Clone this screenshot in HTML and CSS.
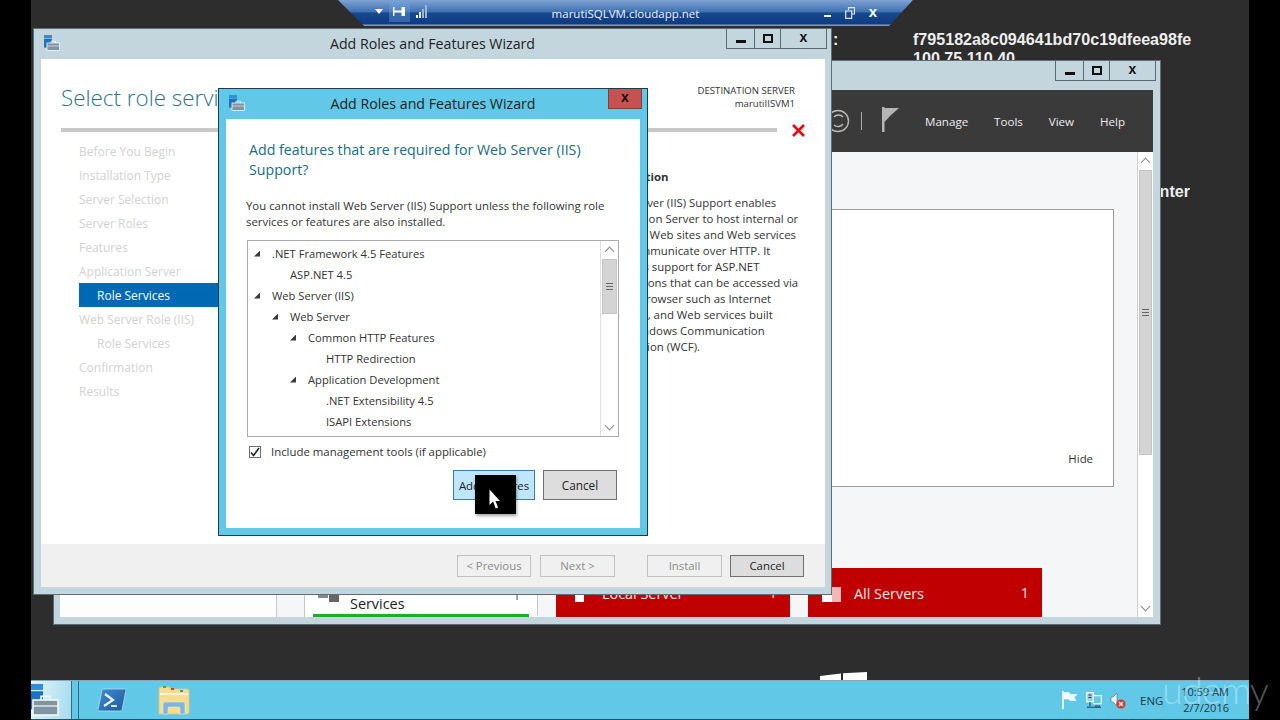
FILE: index.html
```html
<!DOCTYPE html>
<html lang="en">
<head>
  <meta charset="UTF-8" />
  <title>Add Roles and Features Wizard</title>
  <link rel="stylesheet" href="styles.css">
</head>
<body>
  <div class="screen">
    <svg width="0" height="0" class="defs">
      <symbol id="wizard-icon" viewBox="0 0 16 16">
        <rect x="0" y="0" width="8" height="3" fill="#2f8fd8"/>
        <rect x="0" y="3.6" width="8" height="9" fill="#1f73bd"/>
        <rect x="3" y="8" width="12.5" height="7.5" fill="#8094a4" stroke="#f4f8fa" stroke-width="0.8"/>
        <path d="M7 8V6.2h4.5V8" fill="none" stroke="#f4f8fa" stroke-width="0.8"/>
        <path d="M3 11h12.5" stroke="#f4f8fa" stroke-width="0.6"/>
      </symbol>
      <linearGradient id="ps-fill" x1="0" y1="0" x2="1" y2="1">
        <stop offset="0" stop-color="#3f8bd0"/>
        <stop offset="1" stop-color="#1d5a9e"/>
      </linearGradient>
    </svg>

    <div class="desktop-text colon">:</div>
    <div class="desktop-text machine">f795182a8c094641bd70c19dfeea98fe<br>100.75.110.40</div>
    <div class="desktop-text center">Center</div>
    <svg class="desktop-logo" viewBox="0 0 47 9" width="47" height="9">
      <path d="M0 4 L21 1.5 V9 H0Z M23 1.2 L47 0 V9 H23Z" fill="#fff"/>
    </svg>

    <!-- server manager behind the wizard -->
    <section class="window manager">
      <div class="titlebar">
        <div class="caption">
          <span class="cap-btn cap-min"><i></i></span>
          <span class="cap-btn cap-max"><i></i></span>
          <span class="cap-btn cap-close">x</span>
        </div>
      </div>
      <header class="manager-head">
        <svg class="refresh" width="24" height="24" viewBox="0 0 24 24">
          <circle cx="12" cy="12" r="10.5" fill="none" stroke="#b9b9b9" stroke-width="1.4"/>
          <path d="M17 8a6 6 0 0 0-9 0M17 15a6 6 0 0 1-9 1" fill="none" stroke="#b9b9b9" stroke-width="1.4"/>
        </svg>
        <span class="head-sep"></span>
        <svg class="flag" width="17" height="25" viewBox="0 0 17 25">
          <path d="M0 0h2.5v25H0z M2.5 1H17L8 9 2.5 15z" fill="#b5b5b5"/>
        </svg>
        <nav class="manager-menu">
          <span>Manage</span><span>Tools</span><span>View</span><span>Help</span>
        </nav>
      </header>
      <div class="manager-body">
        <div class="manager-content">
          <div class="welcome">
            <span class="hide-link">Hide</span>
          </div>
          <div class="tiles">
            <div class="tile-left"></div>
            <div class="tile-gap"></div>
            <div class="tile tile-ok">
              <div class="tile-marks"><i></i><i></i></div>
              <div class="tile-name">File and Storage<br>Services</div>
              <div class="tile-count">1</div>
            </div>
            <div class="tile-gap tile-gap-short"></div>
            <div class="tile tile-bad tile-local">
              <div class="tile-square"></div>
              <span>Local Server</span>
              <span class="tile-num">1</span>
            </div>
            <div class="tile-gap tile-gap-short"></div>
            <div class="tile tile-bad tile-all">
              <div class="tile-squares"><i></i><i></i></div>
              <span>All Servers</span>
              <span class="tile-num">1</span>
            </div>
          </div>
        </div>
        <div class="scrollbar big-scroll">
          <span class="sb-arrow"></span>
          <div class="sb-thumb big-thumb"><b></b></div>
          <div class="sb-track"></div>
          <span class="sb-arrow sb-down"></span>
        </div>
      </div>
    </section>

    <!-- wizard -->
    <section class="window wizard">
      <div class="titlebar">
        <svg class="win-icon" width="16" height="16"><use href="#wizard-icon"/></svg>
        <div class="win-title">Add Roles and Features Wizard</div>
        <div class="caption">
          <span class="cap-btn cap-min"><i></i></span>
          <span class="cap-btn cap-max"><i></i></span>
          <span class="cap-btn cap-close">x</span>
        </div>
      </div>
      <div class="wizard-body">
        <div class="wizard-head">
          <h1>Select role services</h1>
          <div class="destination">DESTINATION SERVER<br>marutiIISVM1</div>
        </div>
        <div class="wizard-rule">
          <div class="rule"></div>
          <svg width="13" height="13" viewBox="0 0 13 13">
            <path d="M1 1l11 11M12 1L1 12" stroke="#e00c14" stroke-width="2.6"/>
          </svg>
        </div>
        <div class="wizard-cols">
          <ul class="steps">
            <li>Before You Begin</li>
            <li>Installation Type</li>
            <li>Server Selection</li>
            <li>Server Roles</li>
            <li>Features</li>
            <li>Application Server</li>
            <li class="sub current">Role Services</li>
            <li>Web Server Role (IIS)</li>
            <li class="sub">Role Services</li>
            <li>Confirmation</li>
            <li>Results</li>
          </ul>
          <div class="description">
            <h2>Description</h2>
            <p>Web Server (IIS) Support enables<br>Application Server to host internal or<br>external Web sites and Web services<br>that communicate over HTTP. It<br>provides support for ASP.NET<br>applications that can be accessed via<br>a Web browser such as Internet<br>Explorer, and Web services built<br>with Windows Communication<br>Foundation (WCF).</p>
          </div>
        </div>
      </div>
      <div class="wizard-foot">
        <button class="btn" disabled>&lt; Previous</button>
        <button class="btn" disabled>Next &gt;</button>
        <button class="btn btn-install" disabled>Install</button>
        <button class="btn btn-cancel">Cancel</button>
      </div>
    </section>

    <!-- required features dialog -->
    <section class="window dialog">
      <div class="titlebar">
        <svg class="win-icon" width="16" height="16"><use href="#wizard-icon"/></svg>
        <div class="win-title">Add Roles and Features Wizard</div>
        <span class="dialog-close">x</span>
      </div>
      <div class="dialog-body">
        <h2 class="dialog-heading">Add features that are required for Web Server (IIS)<br>Support?</h2>
        <p class="dialog-text">You cannot install Web Server (IIS) Support unless the following role services or features are also installed.</p>
        <div class="tree-box">
          <ul class="tree">
            <li class="lvl0"><i class="twisty"></i>.NET Framework 4.5 Features</li>
            <li class="lvl1">ASP.NET 4.5</li>
            <li class="lvl0"><i class="twisty"></i>Web Server (IIS)</li>
            <li class="lvl1"><i class="twisty"></i>Web Server</li>
            <li class="lvl2"><i class="twisty"></i>Common HTTP Features</li>
            <li class="lvl3">HTTP Redirection</li>
            <li class="lvl2"><i class="twisty"></i>Application Development</li>
            <li class="lvl3">.NET Extensibility 4.5</li>
            <li class="lvl3">ISAPI Extensions</li>
          </ul>
          <div class="scrollbar">
            <span class="sb-arrow"></span>
            <div class="sb-thumb"><b></b></div>
            <div class="sb-track"></div>
            <span class="sb-arrow sb-down"></span>
          </div>
        </div>
        <label class="check-row">
          <span class="check">
            <svg width="10" height="10" viewBox="0 0 10 10"><path d="M1 5.5l2.6 3L9 1" fill="none" stroke="#222" stroke-width="1.6"/></svg>
          </span>
          Include management tools (if applicable)
        </label>
        <div class="dialog-actions">
          <button class="btn dialog-btn btn-add">Add Features</button>
          <button class="btn dialog-btn btn-cancel">Cancel</button>
        </div>
      </div>
    </section>

    <div class="cursor-box">
      <svg width="11" height="21" viewBox="0 0 11 21">
        <path d="M0.5 0.5V16l3.6-3.4 2.6 7 2.4-1-2.6-6.6h4.6z" fill="#fff"/>
      </svg>
    </div>

    <!-- remote desktop connection bar -->
    <div class="rdp-bar">
      <div class="rdp-left">
        <span class="rdp-drop"></span>
        <span class="rdp-pin">
          <svg width="13" height="9" viewBox="0 0 13 9">
            <path d="M.7 0v9" stroke="#fff" stroke-width="1.4"/>
            <path d="M1 3.6h8v1.8H1z" fill="#fff"/>
            <path d="M8.5 0H12v9H8.5z" fill="#fff"/>
          </svg>
        </span>
        <svg class="rdp-signal" width="11" height="13" viewBox="0 0 11 13">
          <path d="M0 10h2v3H0z" fill="#fff"/>
          <path d="M3 7h2v6H3z" fill="#e6edf6"/>
          <path d="M6 4h2v9H6zM9 0h2v13H9z" fill="#9db5d6"/>
        </svg>
      </div>
      <div class="rdp-name">marutiSQLVM.cloudapp.net</div>
      <div class="rdp-right">
        <span class="rdp-min"></span>
        <svg width="10" height="12" viewBox="0 0 10 12"><path d="M3.5 3V.7h6V7H7M.7 4h6v7.3h-6z" fill="none" stroke="#dfe8f4" stroke-width="1.2"/></svg>
        <span class="rdp-close">x</span>
      </div>
    </div>

    <!-- taskbar -->
    <footer class="taskbar">
      <div class="task-active">
        <svg width="32" height="32" viewBox="2 0 16 16"><use href="#wizard-icon"/></svg>
      </div>
      <span class="task-grip"></span>
      <div class="task-item ps">
        <svg width="28" height="24" viewBox="0 0 28 24">
          <path d="M6 1h21q1 0 1 1l-4 20q0 1-2 1H1q-1 0-1-1L4 2q0-1 2-1z" fill="url(#ps-fill)" stroke="#bcd8ea" stroke-width=".8"/>
          <path d="M7 6l8 6-9 6" fill="none" stroke="#eaf4fb" stroke-width="2.2"/>
          <path d="M13 18h6" stroke="#eaf4fb" stroke-width="1.8"/>
        </svg>
      </div>
      <div class="task-item folder">
        <svg width="32" height="30" viewBox="0 0 32 30">
          <path d="M1 4q0-2 2-2h8l3 2h15q2 0 2 2v22q0 1-1 1H2q-1 0-1-1z" fill="#f6dc8c" stroke="#e0c67c" stroke-width=".8"/>
          <path d="M2 9h28" stroke="#fff5d0" stroke-width="2"/>
          <rect x="5" y="1" width="3" height="2" fill="#3eb03e"/>
          <rect x="13" y="3" width="3" height="2" fill="#c04a30"/>
          <rect x="22" y="5" width="3" height="2" fill="#3a8cd0"/>
          <path d="M5 29V19q0-2 2-2h18q2 0 2 2v10h-5v-6q0-1-1-1H11q-1 0-1 1v6z" fill="#7fb4dc" stroke="#d8ecf6" stroke-width=".6"/>
        </svg>
      </div>
      <div class="tray">
        <svg width="16" height="18" viewBox="0 0 16 18"><path d="M1 0v18" stroke="#fff" stroke-width="1.6"/><path d="M2 1.5h5l1.5 2H15l-3 3 2 3H8l-1.5-1.5H2z" fill="#f2fafd" stroke="#fff" stroke-width=".6"/></svg>
        <svg width="16" height="16" viewBox="0 0 16 16"><path d="M.6.6h6.8v9H.6z" fill="#8fd4ea" stroke="#fff" stroke-width="1.2"/><path d="M7.4 3.6h8v8h-8" fill="none" stroke="#fff" stroke-width="1.2"/><path d="M2.5 3h3M2.5 5.5h3M4 10v4M9 14h5M1 15.2h14" stroke="#1f3a46" stroke-width="1"/></svg>
        <svg width="16" height="17" viewBox="0 0 16 17"><path d="M1 5h2l4-4v13l-4-4H1z" fill="#eaf4f8" stroke="#5d7c88" stroke-width=".7"/><circle cx="11" cy="12" r="4.6" fill="#d8352a"/><path d="M9 10l4 4M13 10l-4 4" stroke="#fff" stroke-width="1.3"/></svg>
        <span class="tray-lang">ENG</span>
        <div class="clock">10:59 AM<br>2/7/2016</div>
      </div>
    </footer>
  </div>
  <div class="watermark">udemy</div>
</body>
</html>
```

FILE: styles.css
```css
* {
  box-sizing: border-box;
}
html, body {
  margin: 0;
  height: 100%;
  background: #000;
  overflow: hidden;
}
body {
  font-family: 'Open Sans', 'Noto Sans', sans-serif;
  font-size: 11.4px;
  color: #333;
}
ul {
  list-style: none;
  margin: 0;
  padding: 0;
}
h1, h2, p {
  margin: 0;
  font-weight: 400;
}
.defs {
  position: absolute;
}

/* desktop */
.screen {
  position: absolute;
  left: 31px;
  top: 0;
  width: 1218px;
  height: 720px;
  background: #2d2d2d;
  overflow: hidden;
}
.desktop-text {
  position: absolute;
  font-family: 'Liberation Sans', sans-serif;
  font-weight: 700;
  font-size: 16.1px;
  line-height: 19px;
  color: #eee;
}
.colon { left: 802px; top: 30px; }
.machine { left: 882px; top: 30px; }
.center { left: 1099px; top: 182px; width: 60px; overflow: hidden; white-space: nowrap; text-align: right; }
.desktop-logo {
  position: absolute;
  left: 789px;
  top: 672px;
}

/* windows */
.window {
  position: absolute;
  border: 1px solid #5f6d74;
  background: #c3d6de;
}
.titlebar {
  position: relative;
  display: flex;
  align-items: center;
  justify-content: center;
  height: 30px;
  padding-bottom: 2px;
}
.win-icon {
  position: absolute;
  left: 10px;
  top: 6px;
}
.win-title {
  font-size: 14.2px;
  color: #222;
}
.caption {
  position: absolute;
  right: 4px;
  top: -1px;
  display: flex;
  height: 21px;
  border: 1px solid #5b6a70;
  border-top: 0;
}
.cap-btn {
  display: flex;
  align-items: center;
  justify-content: center;
  height: 100%;
  border-left: 1px solid #5b6a70;
}
.cap-btn:first-child {
  border-left: 0;
}
.cap-min { width: 27px; }
.cap-max { width: 26px; }
.cap-close {
  width: 46px;
  font: 700 14px 'Liberation Sans', sans-serif;
  color: #111;
  padding-bottom: 3px;
}
.cap-min i {
  width: 10px;
  height: 3px;
  margin-top: 7px;
  background: #111;
}
.cap-max i {
  width: 10px;
  height: 9px;
  border: 2px solid #111;
}

/* server manager */
.manager {
  left: 22px;
  top: 60px;
  width: 1108px;
  height: 565px;
  padding: 0 7px 7px 6px;
  overflow: hidden;
}
.manager .titlebar {
  margin: 0 -7px 0 -6px;
}
.manager-head {
  display: flex;
  align-items: center;
  justify-content: flex-end;
  height: 62px;
  margin-top: -1px;
  background: #3a3a3a;
}
.refresh {
  margin-right: 11px;
}
.head-sep {
  width: 1px;
  height: 18px;
  background: #aaa;
  margin-right: 20px;
}
.flag {
  margin: -4px 26px 0 0;
}
.manager-menu {
  display: flex;
  width: 228px;
  padding-right: 28px;
  justify-content: space-between;
  color: #eee;
  font-size: 11.6px;
}
.manager-body {
  display: flex;
  height: 465px;
  background: #f5f6f7;
}
.manager-content {
  flex: 1;
  display: flex;
  flex-direction: column;
}
.welcome {
  position: relative;
  width: 560px;
  height: 278px;
  margin: 57px 0 0 494px;
  background: #fff;
  border: 1px solid #999;
}
.hide-link {
  position: absolute;
  right: 20px;
  bottom: 20px;
}
.tiles {
  display: flex;
  height: 49px;
  margin-top: 81px;
}
.tile-left {
  width: 216px;
  background: #fdfdfd;
}
.tile-gap {
  width: 29px;
  border-left: 1px solid #c8c8c8;
  border-right: 1px solid #c8c8c8;
}
.tile-gap-short {
  width: 18px;
  border-left: 0;
  border-right: 0;
}
.tile {
  position: relative;
  width: 234px;
}
.tile-ok {
  width: 233px;
  background: #fff;
  border-right: 1px solid #c8c8c8;
  border-bottom: 3px solid #fff;
  padding: 0 0 0 45px;
}
.tile-ok::after {
  content: "";
  position: absolute;
  left: 8px;
  right: 8px;
  bottom: -3px;
  height: 3px;
  background: #1aaf2c;
}
.tile-name {
  font-size: 14.4px;
  line-height: 22px;
  color: #222;
  padding-top: 3px;
}
.tile-marks i {
  position: absolute;
  left: 13px;
  top: 26px;
  width: 10px;
  height: 4px;
  background: #888;
}
.tile-marks i + i {
  left: 24px;
  height: 8px;
  background: #666;
}
.tile-count {
  position: absolute;
  right: 17px;
  top: 20px;
  color: #444;
}
.tile-bad {
  display: flex;
  align-items: center;
  padding: 1px 0 0 46px;
  background: #c00000;
  color: #fde8e8;
  font-size: 14.4px;
}
.tile-num {
  position: absolute;
  right: 13px;
  top: 15px;
}
.tile-square {
  position: absolute;
  left: 19px;
  top: 26px;
  width: 9px;
  height: 8px;
  background: #fff;
}
.tile-squares i {
  position: absolute;
  left: 14px;
  top: 27px;
  width: 10px;
  height: 7px;
  background: #fff;
}
.tile-squares i + i {
  left: 24px;
  top: 19px;
  width: 9px;
  height: 15px;
  background: #f2b8b8;
}

/* scrollbars */
.scrollbar {
  display: flex;
  flex-direction: column;
  width: 18px;
  background: #fff;
  border-left: 1px solid #e0e0e0;
}
.sb-arrow {
  display: flex;
  align-items: center;
  justify-content: center;
  height: 18px;
}
.sb-arrow::before {
  content: "";
  width: 6px;
  height: 6px;
  margin-top: 3px;
  border-top: 1px solid #888;
  border-left: 1px solid #888;
  transform: rotate(45deg);
}
.sb-down::before {
  margin: -3px 0 0;
  transform: rotate(225deg);
}
.sb-thumb {
  display: flex;
  align-items: center;
  justify-content: center;
  height: 55px;
  margin: 0 1px;
  background: #d4d4d4;
  border: 1px solid #c4c4c4;
}
.sb-thumb b {
  width: 7px;
  height: 7px;
  background: repeating-linear-gradient(#666 0 1px, transparent 1px 3px);
}
.sb-track {
  flex: 1;
}
.big-scroll {
  width: 16px;
  border-left: 1px solid #d0d0d0;
}
.big-thumb {
  height: 285px;
}

/* wizard */
.wizard {
  left: 2px;
  top: 28px;
  width: 799px;
  height: 567px;
  padding: 0 6px 6px 7px;
}
.wizard .titlebar {
  margin: 0 -6px 0 -7px;
}
.wizard-body {
  height: 485px;
  background: #fff;
  overflow: hidden;
}
.wizard-head {
  display: flex;
  justify-content: space-between;
  height: 65px;
  padding: 22px 30px 0 20px;
}
.wizard-head h1 {
  font-size: 22.4px;
  font-weight: 300;
  line-height: 34px;
  color: #2d7488;
}
.destination {
  padding-top: 3px;
  text-align: right;
  font-size: 9.6px;
  line-height: 13px;
}
.wizard-rule {
  display: flex;
  align-items: center;
  gap: 15px;
  height: 12px;
  padding: 0 20px;
}
.rule {
  flex: 1;
  height: 4px;
  background: #c8c8c8;
}
.wizard-cols {
  display: flex;
  padding-top: 3px;
}
.steps {
  width: 180px;
  margin-left: 38px;
  font-size: 12px;
  color: #d2d2d2;
}
.steps li {
  height: 24px;
  padding-top: 1px;
  line-height: 24px;
}
.steps .sub {
  padding-left: 18px;
}
.steps .current {
  background: #0069b4;
  color: #fff;
}
.description {
  margin-left: 344px;
  padding-top: 30px;
  white-space: nowrap;
}
.description h2 {
  font-size: 11.4px;
  font-weight: 700;
  line-height: 16px;
  margin-bottom: 10px;
}
.description p {
  line-height: 16px;
}
.wizard-foot {
  display: flex;
  justify-content: flex-end;
  align-items: center;
  gap: 9px;
  height: 43px;
  padding: 0 21px 0 0;
  background: #f0f0f0;
}

/* buttons */
.btn {
  width: 74px;
  height: 22px;
  padding: 0;
  font: inherit;
  color: #222;
  background: #ddd;
  border: 1px solid #707070;
}
.btn:disabled {
  color: #8c8c8c;
  background: #f0f0f0;
  border-color: #c0c0c0;
}
.wizard-foot .btn:nth-child(2) {
  width: 75px;
}
.btn-install {
  width: 75px;
  margin-left: 23px;
}
.btn-cancel {
  margin-left: -1px;
}

/* dialog */
.dialog {
  left: 187px;
  top: 88px;
  width: 430px;
  height: 448px;
  padding: 0 7px;
  border-color: #1f3a48;
  background: #62c8e8;
}
.dialog .titlebar {
  margin: 0 -7px;
}
.dialog-close {
  position: absolute;
  left: 389px;
  top: 0;
  width: 34px;
  height: 20px;
  text-align: center;
  font: 700 14px/17px 'Liberation Sans', sans-serif;
  color: #111;
  background: #c75050;
  border: 1px solid #8a3c3c;
  border-top: 0;
}
.dialog-body {
  height: 409px;
  padding: 21px 23px 0 20px;
  background: #fff;
}
.dialog-heading {
  margin-left: 3px;
  font-size: 14.2px;
  line-height: 20px;
  color: #1a6c84;
}
.dialog-text {
  margin-top: 18px;
  line-height: 16px;
}
.tree-box {
  display: flex;
  width: 372px;
  height: 197px;
  margin: 10px 0 0 1px;
  border: 1px solid #ababab;
}
.tree {
  flex: 1;
  padding-top: 2px;
  font-size: 11.2px;
}
.tree li {
  display: flex;
  align-items: center;
  height: 21px;
}
.lvl0 { padding-left: 24px; }
.lvl1 { padding-left: 42px; }
.lvl2 { padding-left: 60px; }
.lvl3 { padding-left: 78px; }
.twisty {
  width: 6px;
  height: 6px;
  margin: 0 12px 0 -18px;
  background: #3a3a3a;
  clip-path: polygon(100% 0, 100% 100%, 0 100%);
}
.check-row {
  display: flex;
  align-items: center;
  gap: 10px;
  height: 12px;
  margin: 8px 0 1px 3px;
}
.check {
  display: flex;
  align-items: center;
  justify-content: center;
  width: 12px;
  height: 12px;
  margin-top: 2px;
  background: #fff;
  border: 1px solid #707070;
}
.dialog-actions {
  display: flex;
  justify-content: flex-end;
  gap: 8px;
  margin-top: 13px;
}
.dialog-btn {
  height: 30px;
}
.btn-add {
  width: 82px;
  background: #bee6fd;
  border-color: #3c7fb1;
}
.dialog-actions .btn-cancel {
  margin-left: 0;
  font-size: 11.8px;
}

/* recording cursor */
.cursor-box {
  position: absolute;
  left: 444px;
  top: 475px;
  width: 41px;
  height: 39px;
  padding: 14px 0 0 14px;
  background: #000;
  box-shadow: 1px 2px 3px rgba(0, 0, 0, .35);
}

/* connection bar */
.rdp-bar {
  position: absolute;
  left: 307px;
  top: 0;
  width: 575px;
  height: 26px;
  display: grid;
  grid-template-columns: 1fr auto 1fr;
  align-items: center;
  font-size: 11.5px;
  color: #f0f4fa;
  background: linear-gradient(#7fa3d2 0, #3f72b2 45%, #17498f 50%, #0f3b82 92%, #7f97b5 96%);
  clip-path: polygon(0 0, 100% 0, calc(100% - 24px) 100%, 26px 100%);
}
.rdp-left {
  display: flex;
  align-items: center;
  height: 22px;
  align-self: start;
  padding-left: 37px;
}
.rdp-drop {
  width: 0;
  height: 0;
  border: 4px solid transparent;
  border-top: 5px solid #fff;
  border-bottom: 0;
  margin-right: 6px;
}
.rdp-pin {
  display: flex;
  align-items: center;
  justify-content: center;
  width: 21px;
  height: 22px;
  background: rgba(110, 160, 220, .4);
}
.rdp-signal {
  margin-left: 6px;
}
.rdp-right {
  display: flex;
  align-items: center;
  justify-content: flex-end;
  gap: 14px;
  padding-right: 36px;
}
.rdp-min {
  width: 7px;
  height: 2px;
  margin-top: 6px;
  background: #fff;
}
.rdp-close {
  font: 700 15px/13px 'Liberation Sans', sans-serif;
  color: #fff;
  margin-top: -3px;
}

/* taskbar */
.taskbar {
  position: absolute;
  left: 0;
  top: 680px;
  width: 1218px;
  height: 40px;
  display: flex;
  align-items: center;
  background: #62c8e8;
  border-top: 1px solid #8aa8b4;
  border-bottom: 1px solid #28505e;
}
.task-active {
  width: 40px;
  height: 100%;
  padding-top: 3px;
  overflow: hidden;
  background: linear-gradient(100deg, #e4f4fa, #a6dcf0);
}
.task-grip {
  width: 8px;
  height: 100%;
  border-left: 1px solid #3c6a7c;
  border-right: 1px solid #3c6a7c;
}
.task-item {
  display: flex;
  justify-content: center;
}
.ps {
  margin-left: 19px;
}
.folder {
  margin-left: 32px;
}
.tray {
  display: flex;
  align-items: center;
  gap: 8px;
  margin-left: auto;
  padding-right: 20px;
  color: #1e3a46;
}
.tray-lang {
  margin: 0 10px 0 6px;
}
.clock {
  text-align: right;
  font-size: 11px;
  line-height: 16px;
}

.watermark {
  position: absolute;
  left: 1162px;
  top: 664px;
  font-family: Lato, 'Open Sans', sans-serif;
  font-weight: 300;
  font-size: 38px;
  line-height: 50px;
  letter-spacing: -1px;
  color: rgba(255, 255, 255, .35);
}
```
